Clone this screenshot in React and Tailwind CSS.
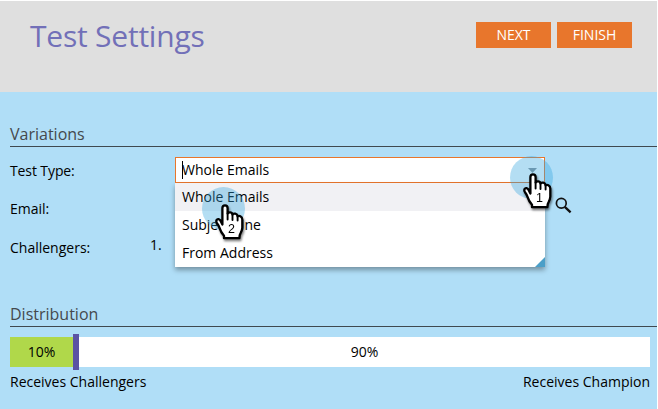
const options = ['Whole Emails', 'Subject Line', 'From Address'];

function HandCursor({ label, className }) {
  return (
    <div className={`absolute z-20 h-[44px] w-[44px] ${className}`}>
      <div className="h-[43px] w-[43px] rounded-full bg-[#33a5de]/37" />
      <svg
        className="absolute top-[17px] left-[13px] overflow-visible drop-shadow-[1px_2px_1px_rgba(0,0,0,0.5)]"
        width="29"
        height="36"
        viewBox="0 0 29 36"
      >
        <path
          d="M7.4 20.5V4Q7.4 1.3 10 1.3Q12.6 1.3 12.6 4V9.6Q13.2 8.2 15.1 8.3Q17.1 8.4 17.5 10.5Q18.5 9.4 20.3 9.7Q22.3 10.1 22.6 12.3Q23.8 11.4 25.4 12.2Q27.3 13.2 27.3 15.5V23.5Q27.1 26.5 25.7 28.8Q24.5 30.6 24.4 34.2H9V31.8Q5.8 28.2 4.4 23.6Q3.6 21.2 2 19.2Q0.7 17.2 1.8 15.8Q3.4 14.2 5.2 16.2Z"
          fill="white"
          stroke="black"
          strokeWidth="2.3"
          strokeLinejoin="round"
        />
        <path d="M12.6 9.5V15.5M17.5 10.5V16M22.6 12.4V16.5" stroke="black" strokeWidth="1.9" strokeLinecap="round" />
        <text x="16.5" y="29" textAnchor="middle" className="font-['Liberation_Sans',sans-serif] text-[12.5px]">
          {label}
        </text>
      </svg>
    </div>
  );
}

function SectionTitle({ children }) {
  return (
    <h2 className="ml-[10px] h-[22px] border-b border-[#3f4950] text-[16px] leading-[18px] text-[#45494d]">
      {children}
    </h2>
  );
}

function TestTypeSelect() {
  return (
    <div className="relative h-[26px] w-[370px]">
      <div className="flex h-[26px] items-center justify-between border border-[#e8762c] bg-white pr-[7px] pl-[6px]">
        <span className="relative leading-[24px]">
          <i className="absolute top-[3px] left-0 h-[18px] w-px bg-black" />
          Whole Emails
        </span>
        <svg width="9" height="5" viewBox="0 0 9 5">
          <path d="M0 0H9L4.5 5Z" fill="#8c9299" />
        </svg>
      </div>
      <ul className="absolute top-[26px] left-0 h-[84px] w-[370px] bg-white shadow-[0_3px_5px_rgba(0,0,0,0.35)]">
        {options.map((option, i) => (
          <li key={option} className={`h-[28px] pl-[7px] leading-[28px] ${i === 0 ? 'bg-[#f1f1f4]' : ''}`}>
            {option}
          </li>
        ))}
        <svg className="absolute right-0 bottom-0" width="10" height="10" viewBox="0 0 10 10">
          <path d="M10 0V10H0Z" fill="#4b9fc8" />
        </svg>
      </ul>
      <HandCursor label="1" className="top-[-1px] left-[335px]" />
      <HandCursor label="2" className="top-[30px] left-[27px]" />
    </div>
  );
}

export default function App() {
  return (
    <div className="h-[409px] w-[658px] overflow-hidden bg-white pt-px pr-px font-['Open_Sans',sans-serif] text-[14px] text-black">
      <header className="flex h-[91px] items-start justify-between bg-[#dfdfdf] pr-[25px] pl-[30px]">
        <h1 className="pt-[14px] text-[30px] leading-[42px] tracking-[-0.22px] text-[#7270b8]">Test Settings</h1>
        <div className="flex gap-[6px] pt-[21px] text-white">
          <button className="h-[26px] w-[75px] bg-[#e8762c] leading-[26px]">NEXT</button>
          <button className="h-[26px] w-[75px] bg-[#e8762c] leading-[26px]">FINISH</button>
        </div>
      </header>
      <main className="h-[317px] bg-[#b0def7] pt-[33px]">
        <SectionTitle>Variations</SectionTitle>
        <div className="relative z-10 flex h-[38px] pt-[10px] pl-[10px]">
          <label className="w-[165px] leading-[28px] tracking-[-0.1px]">Test Type:</label>
          <TestTypeSelect />
        </div>
        <div className="flex h-[39px] justify-between pt-[10px] pr-[85px] pl-[10px]">
          <span className="leading-[28px]">Email:</span>
          <svg className="mt-[2px]" width="17" height="17" viewBox="0 0 17 17" fill="none" stroke="#111">
            <circle cx="6.3" cy="6.3" r="4.9" strokeWidth="1.7" />
            <path d="M9.8 9.8L15.6 15.4" strokeWidth="2.3" />
          </svg>
        </div>
        <div className="flex h-[81px] pt-[9px] pl-[10px]">
          <span className="w-[140px] leading-[30px]">Challengers:</span>
          <span className="leading-[23px]">1.</span>
        </div>
        <SectionTitle>Distribution</SectionTitle>
        <div className="mt-[7px] mr-[7px] ml-[10px] flex h-[36px] items-center leading-[30px]">
          <div className="h-[30px] w-[63px] bg-[#b0d84a] text-center">10%</div>
          <div className="h-[36px] w-[6px] bg-[#5b53a4]" />
          <div className="h-[30px] flex-1 bg-white text-center">90%</div>
        </div>
        <div className="flex justify-between pt-[2px] pr-[7px] pl-[10px] leading-[20px]">
          <span>Receives Challengers</span>
          <span>Receives Champion</span>
        </div>
      </main>
    </div>
  );
}
